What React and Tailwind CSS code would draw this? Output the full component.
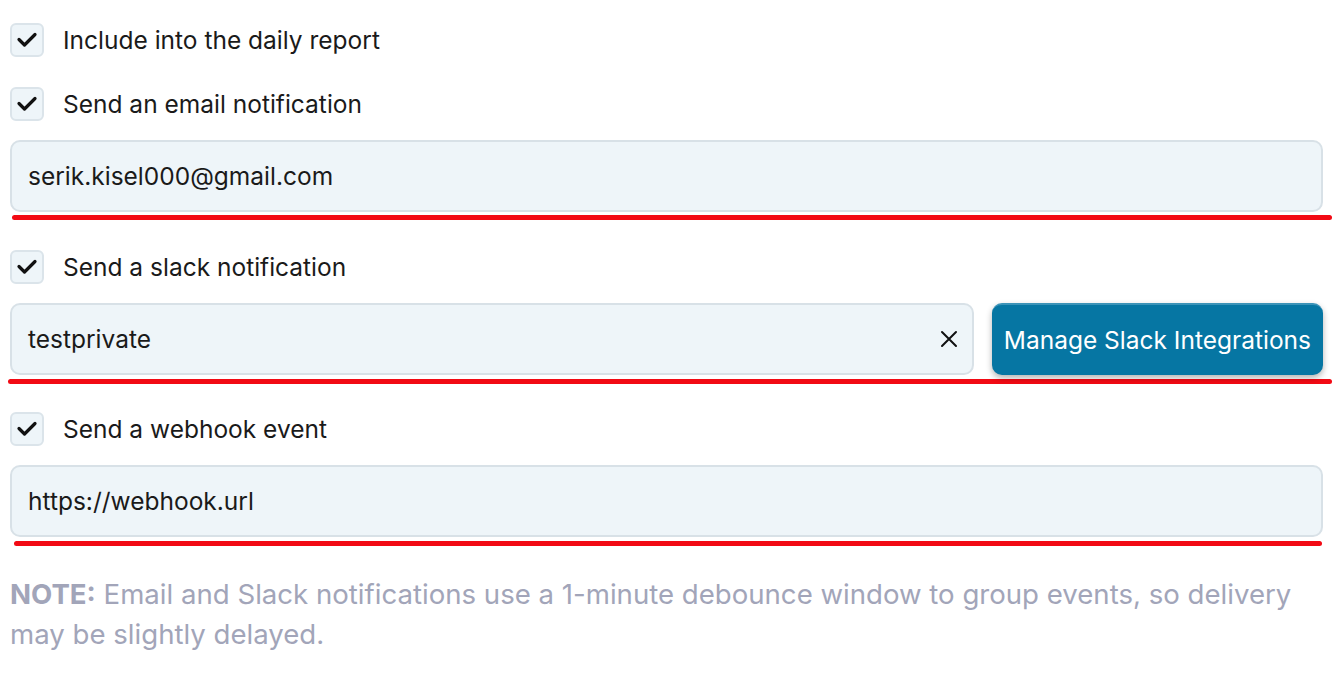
export default function App() {
  const Check = ({ label }) => (
    <div className="flex items-center h-[34px]">
      <div className="w-[34px] h-[34px] shrink-0 rounded-[6px] border-2 border-[#dbe4ea] bg-[#eef5f9] flex items-center justify-center">
        <svg width="22" height="18" viewBox="0 0 22 18" fill="none" className="shrink-0">
          <path d="M3 8.5 L8.5 14 L19 3.5" stroke="#111" strokeWidth="3.2" strokeLinecap="round" strokeLinejoin="round" />
        </svg>
      </div>
      <span className="ml-[19px] text-[24.5px] text-[#1a1a1a]">{label}</span>
    </div>
  );
  const Input = ({ value, children, cls = "" }) => (
    <div className={"h-[72px] rounded-[10px] border-2 border-[#d8e1e7] bg-[#eef5f9] flex items-center pl-[16px] pr-[12px] " + cls}>
      <span className="flex-1 text-[24.5px] text-[#1a1a1a]">{value}</span>
      {children}
    </div>
  );
  const Red = ({ cls }) => <div className={"h-[5px] rounded-full bg-[#f20a14] " + cls} />;
  return (
    <div className="w-[1340px] h-[676px] bg-white pl-[10px] pr-[17px] pt-[23px]" style={{ fontFamily: "Inter, 'Noto Sans', sans-serif" }}>
      <Check label="Include into the daily report" />
      <div className="h-[30px]" />
      <Check label="Send an email notification" />
      <div className="h-[19px]" />
      <Input value="serik.kisel000@gmail.com" />
      <Red cls="mt-[3px] ml-[2px] mr-[-9px]" />
      <div className="h-[30px]" />
      <Check label="Send a slack notification" />
      <div className="h-[19px]" />
      <div className="flex gap-[18px]">
        <Input value="testprivate" cls="flex-1">
          <svg width="18" height="18" viewBox="0 0 18 18" className="mr-[2px]">
            <path d="M2 2 L16 16 M16 2 L2 16" stroke="#111" strokeWidth="2" strokeLinecap="round" />
          </svg>
        </Input>
        <button className="h-[72px] px-[12px] rounded-[10px] bg-[#0676a3] border-t-2 border-[#3b93b8] text-white text-[24.5px] shadow-[0_3px_6px_rgba(0,0,0,0.3)]">
          Manage Slack Integrations
        </button>
      </div>
      <Red cls="mt-[4px] ml-[-2px] mr-[-9px]" />
      <div className="h-[28px]" />
      <Check label="Send a webhook event" />
      <div className="h-[19px]" />
      <Input value="https://webhook.url" />
      <Red cls="mt-[4px] ml-[4px] mr-[1px]" />
      <p className="mt-[28px] text-[27.6px] leading-[40px] text-[#a2a5b9] pr-[10px]">
        <span className="font-bold">NOTE:</span> Email and Slack notifications use a 1-minute debounce window to group events, so delivery may be slightly delayed.
      </p>
    </div>
  );
}
